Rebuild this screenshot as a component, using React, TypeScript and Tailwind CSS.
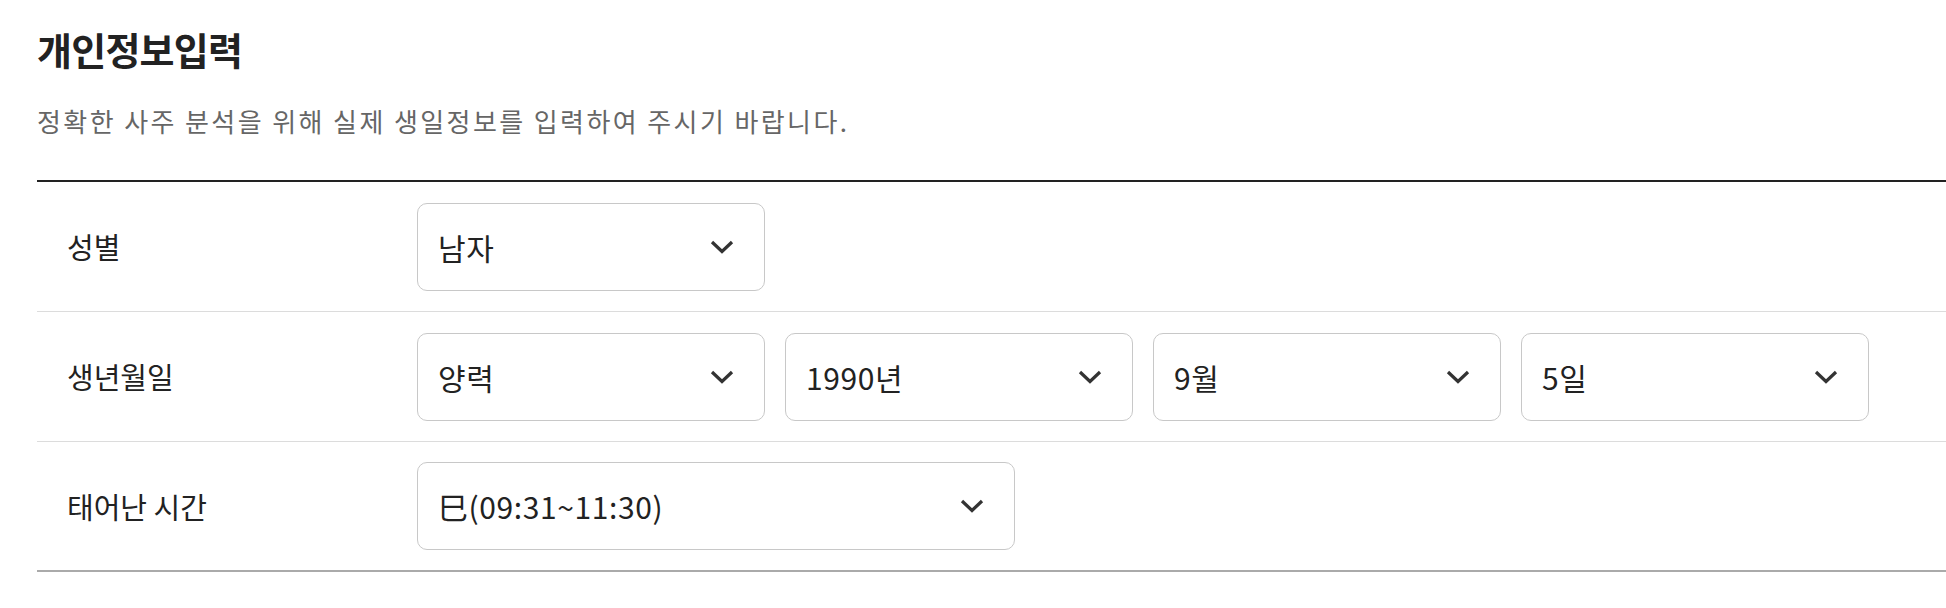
import { ReactNode } from 'react';

function Chevron() {
    return (
        <svg width="24" height="14" viewBox="0 0 24 14" fill="none" className="shrink-0">
            <path d="M2 2 L12 11.5 L22 2" stroke="#333" strokeWidth="3.2" strokeLinecap="butt" strokeLinejoin="miter" />
        </svg>
    );
}

function Select({ value, width }: { value: string; width: string }) {
    return (
        <div className={`${width} h-[88px] flex items-center justify-between border border-[#c8c8c8] rounded-[10px] pl-[20px] pr-[30px] bg-white`}>
            <span className="text-[30px] text-[#222] leading-none tracking-[0.6px]">{value}</span>
            <Chevron />
        </div>
    );
}

function Row({ label, children, last }: { label: string; children: ReactNode; last?: boolean }) {
    return (
        <div className={`flex items-center h-[130px] ${last ? 'border-b-2 border-[#aaa]' : 'border-b border-[#dcdcdc]'}`}>
            <div className="w-[380px] pl-[30px] text-[29px] text-[#222] leading-none">{label}</div>
            <div className="flex gap-[20px]">{children}</div>
        </div>
    );
}

export default function App() {
    return (
        <div className="min-h-screen bg-white pl-[37px] pt-[30px] font-['Noto_Sans_CJK_KR','Noto_Sans',sans-serif]">
            <h2 className="text-[38px] font-bold text-[#222] leading-none tracking-[-0.02em]">개인정보입력</h2>
            <p className="mt-[40px] text-[26px] text-[#666] leading-none tracking-[2.4px]">
                정확한 사주 분석을 위해 실제 생일정보를 입력하여 주시기 바랍니다.
            </p>

            {/* form table */}
            <div className="mt-[46px] border-t-2 border-[#222]">
                <Row label="성별">
                    <Select value="남자" width="w-[348px]" />
                </Row>
                <Row label="생년월일">
                    <Select value="양력" width="w-[348px]" />
                    <Select value="1990년" width="w-[348px]" />
                    <Select value="9월" width="w-[348px]" />
                    <Select value="5일" width="w-[348px]" />
                </Row>
                <Row label="태어난 시간" last>
                    <Select value="巳(09:31~11:30)" width="w-[598px]" />
                </Row>
            </div>
        </div>
    );
}
